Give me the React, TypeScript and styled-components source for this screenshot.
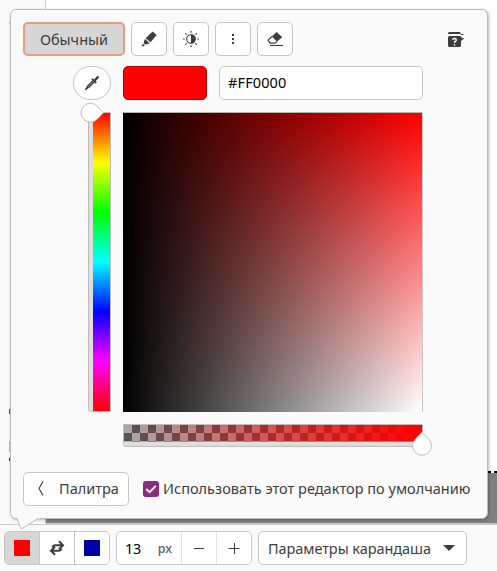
import React from "react";
import styled, { createGlobalStyle } from "styled-components";

const Global = createGlobalStyle`
  * { box-sizing: border-box; }
  html, body { margin: 0; padding: 0; overflow: hidden; }
  body { font-family: "Noto Sans", "Open Sans", sans-serif; font-size: 14.5px; color: #3d3d3d; background: #fafafa; }
  svg { display: block; flex: none; }
`;

const Window = styled.div`
  position: relative;
  width: 497px;
  height: 571px;
  display: flex;
  flex-direction: column;
  background: #fafafa;
`;

const Workspace = styled.div`
  display: flex;
  height: 524px;
`;

const Sidebar = styled.div`
  width: 46px;
  border-right: 1px solid #cdcdcd;
  padding-top: 22px;
`;

const SidebarMark = styled.div<{ $h: number; $gap: number; $color: string }>`
  width: 1px;
  height: ${(p) => p.$h}px;
  margin: ${(p) => p.$gap}px 0 0 9px;
  background: ${(p) => p.$color};
`;

const CanvasArea = styled.div`
  flex: 1;
  display: flex;
  flex-direction: column;
  border-bottom: 1px solid #c8c8c8;
  background: #808080;
`;

const Paper = styled.div`
  height: 471px;
  background: #fff;
`;

const PaperEdge = styled.div`
  height: 2px;
  background: repeating-linear-gradient(to right, #000 0 4px, #fff 4px 7px);
`;

const Toolbar = styled.div`
  height: 47px;
  display: flex;
  align-items: flex-start;
  gap: 6px;
  padding: 6px 4px 0;
  border-top: 1px solid #c8c8c8;
`;

const Group = styled.div<{ $w: number }>`
  display: flex;
  width: ${(p) => p.$w}px;
  height: 34px;
  border: 1px solid #c6c6c6;
  border-radius: 5px;
  background: #fff;
  overflow: hidden;
`;

const Segment = styled.div<{ $w: number; $active?: boolean; $line?: string }>`
  display: flex;
  align-items: center;
  justify-content: center;
  width: ${(p) => p.$w}px;
  background: ${(p) => (p.$active ? "#d6d6d6" : "#fff")};
  border-left: ${(p) => (p.$line ? `1px solid ${p.$line}` : "none")};
`;

const ColorChip = styled.div<{ $color: string }>`
  width: 16px;
  height: 16px;
  background: ${(p) => p.$color};
`;

const SpinValue = styled.div`
  display: flex;
  align-items: center;
  width: 64px;
  padding-left: 8px;
  color: #000;
`;

const Unit = styled.span`
  margin-left: auto;
  padding-right: 9px;
  font-size: 12.5px;
  font-weight: 500;
  color: #606060;
`;

const Label = styled.span<{ $track?: number }>`
  white-space: nowrap;
  line-height: 20px;
  letter-spacing: ${(p) => p.$track ?? 0}px;
`;

const Dropdown = styled(Group)`
  align-items: center;
  justify-content: space-between;
  padding: 0 11px 0 9px;
`;

const Popover = styled.div`
  position: absolute;
  left: 10px;
  top: 9px;
  width: 478px;
  height: 510px;
  padding: 12px;
  display: flex;
  flex-direction: column;
  border: 1px solid #bcbcbc;
  border-radius: 6px;
  background: #fafafa;
  box-shadow: 1px 1px 3px rgba(0, 0, 0, 0.28);
`;

const Tail = styled.svg`
  position: absolute;
  left: 14px;
  top: 517px;
`;

const Row = styled.div<{ $gap?: number; $top?: number; $left?: number }>`
  display: flex;
  align-items: flex-start;
  gap: ${(p) => p.$gap ?? 0}px;
  margin-top: ${(p) => p.$top ?? 0}px;
  padding-left: ${(p) => p.$left ?? 0}px;
`;

const Button = styled.button<{ $w: number; $active?: boolean }>`
  display: flex;
  align-items: center;
  justify-content: center;
  width: ${(p) => p.$w}px;
  height: 34px;
  padding: 0;
  font: inherit;
  color: inherit;
  border: ${(p) => (p.$active ? "2px solid #e99b80" : "1px solid #c6c6c6")};
  border-radius: 5px;
  background: ${(p) => (p.$active ? "#d6d6d6" : "#fff")};
`;

const RoundButton = styled(Button)`
  border-radius: 17px;
`;

const BackButton = styled(Button)`
  justify-content: flex-start;
  gap: 14px;
  padding: 0 0 2px 13px;
`;

const HelpSlot = styled.div`
  margin: 10px 0 0 149px;
`;

const CurrentColor = styled.div`
  width: 84px;
  height: 34px;
  margin-left: 12px;
  border: 1px solid #b40000;
  border-radius: 5px;
  background: #f00;
`;

const HexEntry = styled.div`
  display: flex;
  align-items: center;
  width: 204px;
  height: 34px;
  margin-left: 12px;
  padding: 0 0 2px 8px;
  border: 1px solid #c6c6c6;
  border-radius: 5px;
  background: #fff;
  color: #000;
`;

const HueSlider = styled.div`
  position: relative;
  width: 23px;
  height: 300px;
  padding-left: 4px;
  border: 1px solid #bfbbb9;
  border-radius: 0 0 0 3px;
  background: #dedede;
`;

const HueRamp = styled.div`
  height: 298px;
  background: linear-gradient(to bottom, #f00, #ff0 16.67%, #0f0 33.33%, #0ff 50%, #00f 66.67%, #f0f 83.33%, #f00);
`;

const Field = styled.div`
  width: 300px;
  height: 300px;
  border-top: 1px solid #b9b3b0;
  border-right: 1px solid #c9c5c3;
  background: linear-gradient(to right, #000, rgba(0, 0, 0, 0)), linear-gradient(to bottom, #f00, #fff);
`;

const AlphaSlider = styled.div`
  position: relative;
  width: 300px;
  height: 23px;
  border: 1px solid #bfbbb9;
  border-radius: 0 0 3px 3px;
  background: #dedede;
`;

const AlphaRamp = styled.div`
  height: 17px;
  border-bottom: 1px solid #bfbbb980;
  background:
    linear-gradient(to right, rgba(255, 0, 0, 0), #f00),
    repeating-conic-gradient(#555 0 25%, #a9a9a9 0 50%) 0 0 / 16px 16px;
`;

const Knob = styled.svg<{ $x: number; $y: number }>`
  position: absolute;
  left: ${(p) => p.$x}px;
  top: ${(p) => p.$y}px;
`;

const CheckLabel = styled.label`
  display: flex;
  align-items: center;
  gap: 4px;
  height: 34px;
  margin-left: 14px;

  ${Label} {
    padding-bottom: 2px;
  }
`;

const Check = styled.span`
  display: flex;
  width: 16px;
  height: 16px;
  border-radius: 3px;
  background: #8a2a80;
`;

const Marker = () => (
  <svg width="16" height="16" viewBox="0 0 16 16" fill="#3d3d3d">
    <path d="M11.6.4 15.6 4 9.6 11.2 4.6 7.3Z" />
    <path d="M4 8.1 8.6 12 6.4 13.2 3.8 13.4 2.7 12.2 3 9.9Z" />
    <path d="M2 12.8 3.6 14.2 2.6 15.2H.5Z" />
  </svg>
);

const Contrast = () => (
  <svg width="16" height="16" viewBox="0 0 16 16">
    <circle cx="8" cy="8" r="4.3" fill="none" stroke="#3d3d3d" strokeWidth="1.1" />
    <path d="M8 3.5a4.5 4.5 0 0 1 0 9Z" fill="#3d3d3d" />
    <path
      d="M8 0v1.7M8 14.3V16M0 8h1.7M14.3 8H16M2.3 2.3l1.3 1.3M12.4 12.4l1.3 1.3M13.7 2.3l-1.3 1.3M3.6 12.4l-1.3 1.3"
      stroke="#3d3d3d"
      strokeWidth="1.2"
    />
  </svg>
);

const Dots = () => (
  <svg width="16" height="16" viewBox="0 0 16 16" fill="#3d3d3d">
    <path d="M7 3h2v2H7zM7 7h2v2H7zM7 11h2v2H7z" />
  </svg>
);

const Eraser = () => (
  <svg width="16" height="16" viewBox="0 0 16 16">
    <path d="M9.7 1 15.2 6.2 10 10.4 4.8 5.5Z" fill="#3d3d3d" />
    <path d="M4.8 5.5 1 9.2 3.2 12.2H7.8L10 10.4" fill="none" stroke="#3d3d3d" strokeWidth="1.2" />
    <path d="M3 14.5h13" stroke="#3d3d3d" strokeWidth="1.1" />
  </svg>
);

const Help = () => (
  <svg width="16" height="16" viewBox="0 0 16 16">
    <path d="M0 2V1.2Q.3 0 1.5 0H12l1 2H16L14.5 3.6 12.4 2.2H0Z" fill="#3d3d3d" />
    <path d="M1.8 4H13l1 2.2 2-.2-1.3 2L13 8.7V13.5Q13 15 11.5 15H1.6Q0 15 0 13.5V5.5Q0 4 1.8 4Z" fill="#3d3d3d" />
    <path d="M0 2.7H12L13.5 4.3 16 4" fill="none" stroke="#fafafa" strokeWidth="1.4" />
    <path d="M4.6 7.8Q4.8 6.5 6.5 6.5T8.4 8Q8.4 8.8 6.6 9.8V11M6.6 12.2v1.5" fill="none" stroke="#fafafa" strokeWidth="1.4" />
  </svg>
);

const Dropper = () => (
  <svg width="16" height="16" viewBox="0 0 16 16">
    <path d="M9.2 5.4 12.6 1.5Q15.2.2 14.8 3.1L10.8 6.8Z" fill="#3d3d3d" />
    <path d="M8 3.9 12.1 8" stroke="#3d3d3d" strokeWidth="2" />
    <path d="M9 5.6 3.5 11.2 2.7 13.3 4.8 12.5 10.3 6.9" fill="#8a8a8a" stroke="#3d3d3d" strokeWidth="1.2" />
    <path d="M3.4 12.6 1.3 14.8" stroke="#3d3d3d" strokeWidth="1.6" />
  </svg>
);

const Chevron = () => (
  <svg width="8" height="16" viewBox="0 0 8 16">
    <path d="M6 1.5 2 8.5 6 15.5" fill="none" stroke="#3d3d3d" strokeWidth="1.1" />
  </svg>
);

const Swap = () => (
  <svg width="16" height="16" viewBox="0 0 16 16" fill="none" stroke="#3d3d3d" strokeWidth="2">
    <path d="M3.5 7.4Q4 5.2 6.5 5.2H13.6M10 1.2 14 5.2 10 9.2" />
    <path d="M12.5 8.6Q12 10.8 9.5 10.8H2.4M6 6.8 2 10.8 6 14.8" />
  </svg>
);

const Minus = () => (
  <svg width="12" height="12" viewBox="0 0 12 12">
    <path d="M1 6.5h10" stroke="#3d3d3d" />
  </svg>
);

const Plus = () => (
  <svg width="12" height="12" viewBox="0 0 12 12">
    <path d="M.5 6.5h11M6.5 1v11" stroke="#3d3d3d" />
  </svg>
);

export default function App() {
  return (
    <Window>
      <Global />
      <Workspace>
        <Sidebar>
          <SidebarMark $h={2} $gap={0} $color="#c4c4c4" />
          <SidebarMark $h={5} $gap={385} $color="#555" />
          <SidebarMark $h={11} $gap={27} $color="#bbb" />
          <SidebarMark $h={3} $gap={6} $color="#333" />
        </Sidebar>
        <CanvasArea>
          <Paper />
          <PaperEdge />
        </CanvasArea>
      </Workspace>
      <Toolbar>
        <Group $w={106}>
          <Segment $w={34} $active><ColorChip $color="#f00" /></Segment>
          <Segment $w={35} $line="#c6c6c6"><Swap /></Segment>
          <Segment $w={35} $line="#c6c6c6"><ColorChip $color="#0000a8" /></Segment>
        </Group>
        <Group $w={136}>
          <SpinValue>
            <Label $track={-0.2}>13</Label>
            <Unit>px</Unit>
          </SpinValue>
          <Segment $w={35} $line="#e2e2e2"><Minus /></Segment>
          <Segment $w={35} $line="#e2e2e2"><Plus /></Segment>
        </Group>
        <Dropdown $w={209}>
          <Label $track={-0.06}>Параметры карандаша</Label>
          <svg width="12" height="6" viewBox="0 0 12 6"><path d="M0 0h12L6 6Z" fill="#3d3d3d" /></svg>
        </Dropdown>
      </Toolbar>

      <Popover>
        <Row $gap={6}>
          <Button $w={102} $active><Label>Обычный</Label></Button>
          <Button $w={36}><Marker /></Button>
          <Button $w={36}><Contrast /></Button>
          <Button $w={36}><Dots /></Button>
          <Button $w={36}><Eraser /></Button>
          <HelpSlot><Help /></HelpSlot>
        </Row>
        <Row $top={10} $left={50}>
          <RoundButton $w={38}><Dropper /></RoundButton>
          <CurrentColor />
          <HexEntry><Label $track={0.12}>#FF0000</Label></HexEntry>
        </Row>
        <Row $top={12} $left={65} $gap={12}>
          <HueSlider>
            <HueRamp />
            <Knob $x={-9.5} $y={-10.6} width="26" height="22" viewBox="0 0 26 22">
              <path d="M17.2 4.2 23.5 10.7 17.2 17.3A9.4 9.4 0 1 1 17.2 4.2Z" fill="#fff" stroke="#c3bfba" />
            </Knob>
          </HueSlider>
          <Field />
        </Row>
        <Row $top={12} $left={100}>
          <AlphaSlider>
            <AlphaRamp />
            <Knob $x={287} $y={6} width="22" height="26" viewBox="0 0 22 26">
              <path d="M4.4 8.1 11 1.2 17.6 8.1A9.4 9.4 0 1 1 4.4 8.1Z" fill="#fff" stroke="#c3bfba" />
            </Knob>
          </AlphaSlider>
        </Row>
        <Row $top={25}>
          <BackButton $w={106}><Chevron /><Label>Палитра</Label></BackButton>
          <CheckLabel>
            <Check>
              <svg width="16" height="16" viewBox="0 0 16 16">
                <path d="M3.2 8 6.6 11.2 12.8 4.8" fill="none" stroke="#fff" strokeWidth="1.9" />
              </svg>
            </Check>
            <Label $track={0.02}>Использовать этот редактор по умолчанию</Label>
          </CheckLabel>
        </Row>
      </Popover>
      <Tail width="26" height="13" viewBox="0 0 26 13">
        <path d="M3 0H26V1.5H23.5L7.3 12 3.5 1.5Z" fill="#fafafa" />
        <path d="M3 1.5 7.3 12 24 1.5" fill="none" stroke="#bcbcbc" />
      </Tail>
    </Window>
  );
}
